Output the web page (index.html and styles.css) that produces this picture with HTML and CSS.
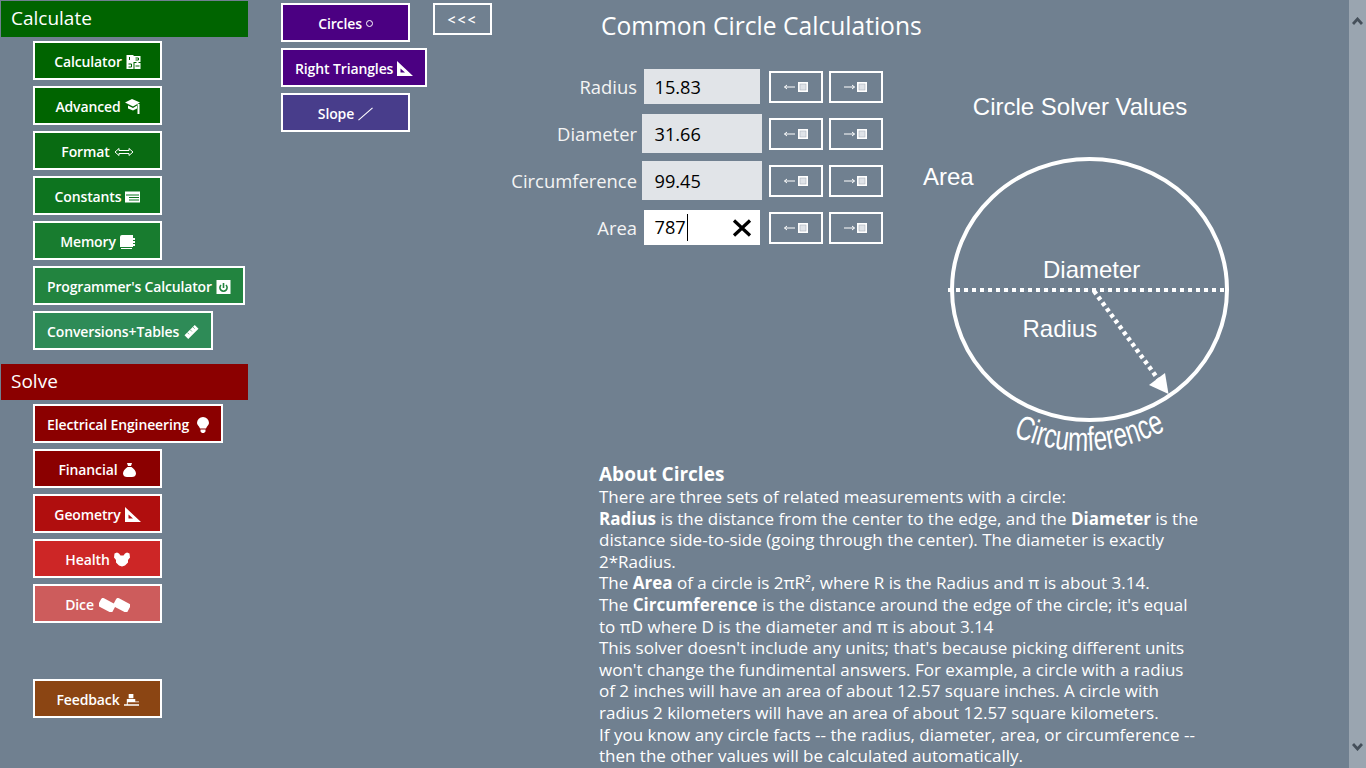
FILE: index.html
```html
<!DOCTYPE html>
<html lang="en">
<head>
    <meta charset="UTF-8">
    <meta name="viewport" content="width=device-width, initial-scale=1.0">
    <title>Common Circle Calculations</title>
    <link rel="stylesheet" href="styles.css">
</head>
<body>
    <svg class="defs" width="0" height="0">
        <symbol id="set-square" viewBox="0 0 16 15">
            <path fill-rule="evenodd" d="M0 0 L16 15 H0 Z M3.5 7.5 V11.5 H8 Z" fill="#fff"/>
        </symbol>
        <symbol id="to-left" viewBox="0 0 24 10">
            <path d="M0.5 5 H11 M0.5 5 L3 3 M0.5 5 L3 7" fill="none" stroke="#fff" stroke-width="1"/>
            <rect x="14" y="0" width="10" height="10" fill="#fff"/>
            <rect x="16" y="2" width="6" height="6" fill="#dfe3e8" stroke="#aab3bd" stroke-width=".6"/>
        </symbol>
        <symbol id="to-right" viewBox="0 0 24 10">
            <path d="M0 5 H10.5 M10.5 5 L8 3 M10.5 5 L8 7" fill="none" stroke="#fff" stroke-width="1"/>
            <rect x="13" y="0" width="10" height="10" fill="#fff"/>
            <rect x="15" y="2" width="6" height="6" fill="#dfe3e8" stroke="#aab3bd" stroke-width=".6"/>
        </symbol>
    </svg>

    <div class="app">
        <nav class="sidebar">
            <h2 class="group-title green">Calculate</h2>
            <div class="group">
                <button class="btn c-green1">Calculator
                    <svg class="icon" viewBox="0 0 14 14"><path d="M0 0H7V7H0Z M7 1H14V7H7Z M0 7H7V14H0Z M8 8H10V6H12V8H14V14H8Z" fill="#fff"/><path d="M3 2V5 M9 3H12V5H9 M2 9H5V12H2 M9 11H13" fill="none" stroke="#006400" stroke-width="1"/></svg>
                </button>
                <button class="btn c-green1">Advanced
                    <svg class="icon tall" viewBox="0 0 15 15"><path d="M0 3.5 L7 0 L15 3.5 L8 7.5Z M3 6.5 L8 9 L12 6.5 V9.5 L8 11.5 L3 9.5Z" fill="#fff"/><path d="M12.5 5 H14.5 V15 H12.5Z" fill="#fff"/></svg>
                </button>
                <button class="btn c-green2">Format
                    <svg class="icon wide" viewBox="0 0 20 10"><path d="M5 1.5 L1 5 L5 8.5 V6.5 H15 V8.5 L19 5 L15 1.5 V3.5 H5Z" fill="none" stroke="#fff" stroke-width="1"/></svg>
                </button>
                <button class="btn c-green3">Constants
                    <svg class="icon" viewBox="0 0 15 11"><path fill-rule="evenodd" d="M0 0H15V11H0Z M1 3V4H14V3Z M4 5.5V6.5H14V5.5Z M4 8V9H14V8Z" fill="#fff"/></svg>
                </button>
                <button class="btn c-green4">Memory
                    <svg class="icon" viewBox="0 0 15 14"><path d="M2 0H13V3H15V5H13V6H15V8H13V9H15V11H13V12H0V2Q0 0 2 0Z" fill="#fff"/><path d="M1 13.5H12" stroke="#fff" stroke-width="1"/></svg>
                </button>
                <button class="btn c-green5 tight">Programmer's Calculator
                    <svg class="icon" viewBox="0 0 14 14"><rect width="14" height="14" fill="#fff"/><path d="M4.5 5A3.6 3.6 0 1 0 9.5 5" fill="none" stroke="#22843f" stroke-width="1.6"/><path d="M7 3V8" stroke="#22843f" stroke-width="1.6"/></svg>
                </button>
                <button class="btn c-green6">Conversions+Tables
                    <svg class="icon ruler" viewBox="0 0 15 15"><path d="M0 11 L11 0 L15 4 L4 15Z" fill="#fff"/><path d="M3 8 L5 10 M6 5 L8 7 M9 2 L11 4" stroke="#2e8b57" stroke-width=".7"/></svg>
                </button>
            </div>

            <h2 class="group-title red">Solve</h2>
            <div class="group">
                <button class="btn c-red1">Electrical Engineering
                    <svg class="icon bulb" viewBox="0 0 12 16"><path d="M6 0A6 6 0 0 1 12 6C12 8 10 9 9 11.5H3C2 9 0 8 0 6A6 6 0 0 1 6 0Z M3.5 12.5H8.5V14.5L7 16H5L3.5 14.5Z" fill="#fff"/></svg>
                </button>
                <button class="btn c-red1">Financial
                    <svg class="icon" viewBox="0 0 13 14"><path d="M4 0H9L8 3H5Z M4.5 4H8.5C11 6 13 8 13 10.5C13 13 11 14 9 14H4C2 14 0 13 0 10.5C0 8 2 6 4.5 4Z" fill="#fff"/></svg>
                </button>
                <button class="btn c-red2">Geometry
                    <svg class="icon tri" viewBox="0 0 16 15"><use href="#set-square"/></svg>
                </button>
                <button class="btn c-red3">Health
                    <svg class="icon tri" viewBox="0 0 16 14"><path d="M0.5 1 L3 0 L5 1 L6.5 3 H9.5 L11 1 L13 0 L15.5 1 L16 5 L14 7.5 L14 10 L11 13 L8 14 L5 13 L2 10 L2 7.5 L0 5Z" fill="#fff"/></svg>
                </button>
                <button class="btn c-red4">Dice
                    <svg class="icon dice" viewBox="0 0 31 14"><rect x="0" y="2.5" width="16" height="9.5" rx="2.2" transform="rotate(28 8 7)" fill="#fff"/><rect x="15" y="2.5" width="16" height="9.5" rx="2.2" transform="rotate(28 23 7)" fill="#fff"/></svg>
                </button>
            </div>

            <div class="group feedback">
                <button class="btn c-brown">Feedback
                    <svg class="icon" viewBox="0 0 16 13"><path d="M5 0H10V4.5H5Z M3 5.5H12V8H16V9H4V11H16V12.5H0V11H3Z" fill="#fff"/></svg>
                </button>
            </div>
        </nav>

        <div class="tabs">
            <div class="tab-list">
                <button class="btn c-indigo">Circles <span class="circle-mark"></span></button>
                <button class="btn c-indigo">Right Triangles
                    <svg class="icon tri" viewBox="0 0 16 15"><use href="#set-square"/></svg>
                </button>
                <button class="btn c-slate">Slope
                    <svg class="icon" viewBox="0 0 16 14"><path d="M0.5 13.5 L15.5 0.5" stroke="#fff" stroke-width="1.2" fill="none"/></svg>
                </button>
            </div>
            <button class="back-btn">&lt;&lt;&lt;</button>
        </div>

        <main class="solver">
            <h1 class="solver-title">Common Circle Calculations</h1>
            <div class="solver-top">
                <div class="fields">
                    <div class="field">
                        <label>Radius</label>
                        <div class="value">15.83</div>
                        <button class="move-btn"><svg viewBox="0 0 24 10"><use href="#to-left"/></svg></button>
                        <button class="move-btn"><svg viewBox="0 0 24 10"><use href="#to-right"/></svg></button>
                    </div>
                    <div class="field">
                        <label>Diameter</label>
                        <div class="value large">31.66</div>
                        <button class="move-btn"><svg viewBox="0 0 24 10"><use href="#to-left"/></svg></button>
                        <button class="move-btn"><svg viewBox="0 0 24 10"><use href="#to-right"/></svg></button>
                    </div>
                    <div class="field">
                        <label>Circumference</label>
                        <div class="value large">99.45</div>
                        <button class="move-btn"><svg viewBox="0 0 24 10"><use href="#to-left"/></svg></button>
                        <button class="move-btn"><svg viewBox="0 0 24 10"><use href="#to-right"/></svg></button>
                    </div>
                    <div class="field">
                        <label>Area</label>
                        <div class="value active"><span class="caret">787</span>
                            <svg class="clear" viewBox="0 0 20 18"><path d="M2 1.5 L18 16.5 M18 1.5 L2 16.5" stroke="#000" stroke-width="3.2" fill="none"/></svg>
                        </div>
                        <button class="move-btn"><svg viewBox="0 0 24 10"><use href="#to-left"/></svg></button>
                        <button class="move-btn"><svg viewBox="0 0 24 10"><use href="#to-right"/></svg></button>
                    </div>
                </div>

                <!-- viewBox uses page coordinates so the numbers can be read off the screenshot -->
                <svg class="diagram" viewBox="910 95 340 369" width="340" height="369">
                    <text x="1080" y="115" text-anchor="middle">Circle Solver Values</text>
                    <text x="923" y="185">Area</text>
                    <text x="1043" y="278">Diameter</text>
                    <text x="1022.5" y="337">Radius</text>
                    <ellipse cx="1089.5" cy="289.5" rx="137.5" ry="130.5" fill="none" stroke="#fff" stroke-width="4"/>
                    <path d="M948 290 H1228" stroke="#fff" stroke-width="4" stroke-dasharray="4 4" fill="none"/>
                    <path d="M1094 291 L1158 379" stroke="#fff" stroke-width="4.5" stroke-dasharray="3.8 3.4" fill="none"/>
                    <path d="M1168.5 394 L1149 385 L1165 373Z" fill="#fff"/>
                    <path id="circ-arc" d="M1013 436 Q1088 468 1164 431" fill="none"/>
                    <text class="circ-label"><textPath href="#circ-arc" textLength="158" lengthAdjust="spacingAndGlyphs">Circumference</textPath></text>
                </svg>
            </div>

            <section class="about">
                <h3>About Circles</h3>
                <p>There are three sets of related measurements with a circle:<br>
                <b>Radius</b> is the distance from the center to the edge, and the <b>Diameter</b> is the<br>
                distance side-to-side (going through the center). The diameter is exactly<br>
                2*Radius.<br>
                The <b>Area</b> of a circle is 2πR², where R is the Radius and π is about 3.14.<br>
                The <b>Circumference</b> is the distance around the edge of the circle; it's equal<br>
                to πD where D is the diameter and π is about 3.14<br>
                This solver doesn't include any units; that's because picking different units<br>
                won't change the fundimental answers. For example, a circle with a radius<br>
                of 2 inches will have an area of about 12.57 square inches. A circle with<br>
                radius 2 kilometers will have an area of about 12.57 square kilometers.<br>
                If you know any circle facts -- the radius, diameter, area, or circumference --<br>
                then the other values will be calculated automatically.</p>
            </section>
        </main>

        <div class="scrollbar">
            <svg viewBox="0 0 11 8"><path d="M1 7 L5.5 2 L10 7" fill="none" stroke="#454f5a" stroke-width="2.8"/></svg>
            <svg viewBox="0 0 11 8"><path d="M1 1 L5.5 6 L10 1" fill="none" stroke="#454f5a" stroke-width="2.8"/></svg>
        </div>
    </div>
</body>
</html>
```

FILE: styles.css
```css
* {
    margin: 0;
    padding: 0;
    box-sizing: border-box;
}

body {
    font-family: 'Open Sans', 'Noto Sans', sans-serif;
    background-color: #708090;
    color: #fff;
    height: 100vh;
    overflow: hidden;
}

.defs {
    position: absolute;
}

.app {
    display: flex;
    height: 768px;
}

/* Left menu */
.sidebar {
    width: 281px;
    flex-shrink: 0;
    padding: 1px 0 0 1px;
}

.group-title {
    width: 247px;
    height: 36px;
    line-height: 34px;
    padding-left: 10px;
    font-size: 19px;
    font-weight: 400;
}

.group-title.green {
    background-color: #006400;
}

.group-title.red {
    background-color: #8b0000;
}

.group {
    display: flex;
    flex-direction: column;
    align-items: flex-start;
    gap: 6px;
    padding: 4px 0 0 32px;
    margin-bottom: 14px;
}

.group.feedback {
    margin-top: 52px;
}

.btn {
    display: flex;
    align-items: center;
    justify-content: center;
    gap: 4px;
    min-width: 129px;
    height: 39px;
    padding: 2px 12px 0;
    border: 2px solid #fff;
    color: #fff;
    font-family: inherit;
    font-size: 14px;
    font-weight: 600;
    letter-spacing: -0.12px;
    white-space: nowrap;
    cursor: pointer;
}

.btn.tight {
    letter-spacing: -0.17px;
}

.icon {
    width: 15px;
    height: 14px;
    flex-shrink: 0;
}

.icon.tall {
    height: 15px;
}

.icon.wide {
    width: 20px;
}

.icon.dice {
    width: 31px;
    margin-left: 1px;
}

.icon.tri {
    width: 16px;
    height: 15px;
}

.icon.ruler {
    margin-left: 1px;
}

.icon.bulb {
    width: 12px;
    height: 16px;
    margin-left: 4px;
}

.c-green1 { background-color: #006400; }
.c-green2 { background-color: #096b12; }
.c-green3 { background-color: #0d741f; }
.c-green4 { background-color: #187c2f; }
.c-green5 { background-color: #22843f; }
.c-green6 { background-color: #2e8b57; }
.c-red1 { background-color: #8b0000; }
.c-red2 { background-color: #b00e0e; }
.c-red3 { background-color: #cd2626; }
.c-red4 { background-color: #cd5c5c; }
.c-brown { background-color: #8b4513; }
.c-indigo { background-color: #4b0082; }
.c-slate { background-color: #483d8b; }

/* Solver picker */
.tabs {
    width: 218px;
    flex-shrink: 0;
    display: flex;
    align-items: flex-start;
    gap: 23px;
    padding-top: 3px;
}

.tab-list {
    width: 129px;
    display: flex;
    flex-direction: column;
    align-items: flex-start;
    gap: 6px;
}

.circle-mark {
    width: 7px;
    height: 7px;
    border: 1px solid #fff;
    border-radius: 50%;
}

.back-btn {
    width: 59px;
    height: 32px;
    background: transparent;
    border: 2px solid #fff;
    color: #fff;
    font-family: inherit;
    font-size: 14px;
    font-weight: 600;
    letter-spacing: 2px;
    cursor: pointer;
}

/* Solver */
.solver {
    flex: 1;
    min-width: 0;
}

.solver-title {
    font-size: 24.6px;
    font-weight: 400;
    height: 63px;
    padding: 9px 0 0 102px;
}

.solver-top {
    display: flex;
    height: 401px;
}

.fields {
    width: 411px;
    flex-shrink: 0;
}

.field {
    display: flex;
    align-items: center;
    height: 47px;
}

.field label {
    width: 138px;
    text-align: right;
    font-size: 18.4px;
    color: #f4f4f4;
}

.value {
    width: 116px;
    height: 35px;
    margin: 0 9px 0 7px;
    padding-left: 10.5px;
    display: flex;
    align-items: center;
    justify-content: space-between;
    background-color: #e1e4e8;
    color: #000;
    font-size: 18.2px;
}

.value.large {
    width: 120px;
    height: 39px;
    margin: 0 7px 0 5px;
    padding-left: 12.5px;
}

.value.active {
    background-color: #fff;
}

.caret {
    border-right: 1px solid #000;
    padding-right: 1px;
    height: 27px;
    line-height: 27px;
}

.clear {
    width: 20px;
    height: 18px;
    margin-right: 8px;
}

.move-btn {
    display: flex;
    align-items: center;
    justify-content: center;
    width: 54px;
    height: 32px;
    margin-right: 6px;
    background: transparent;
    border: 2px solid #fff;
    cursor: pointer;
}

.move-btn svg {
    width: 24px;
    height: 10px;
}

.diagram {
    flex-shrink: 0;
    margin-top: 32px;
    overflow: visible;
}

.diagram text {
    font-family: 'Liberation Sans', Arial, sans-serif;
    font-size: 24px;
    fill: #fff;
}

.diagram .circ-label {
    font-size: 34px;
}

.about {
    padding-left: 100px;
    width: 720px;
    font-size: 17px;
    line-height: 21.6px;
}

.about h3 {
    font-size: 19px;
    font-weight: 700;
    line-height: 20px;
    margin-bottom: 2px;
}

.about b {
    font-weight: 700;
}

/* Fake scrollbar, the content fits the window */
.scrollbar {
    width: 17px;
    flex-shrink: 0;
    display: flex;
    flex-direction: column;
    justify-content: space-between;
    align-items: center;
    padding: 17px 0;
    background-color: #9aa5b0;
}

.scrollbar svg {
    width: 11px;
    height: 8px;
}
```
